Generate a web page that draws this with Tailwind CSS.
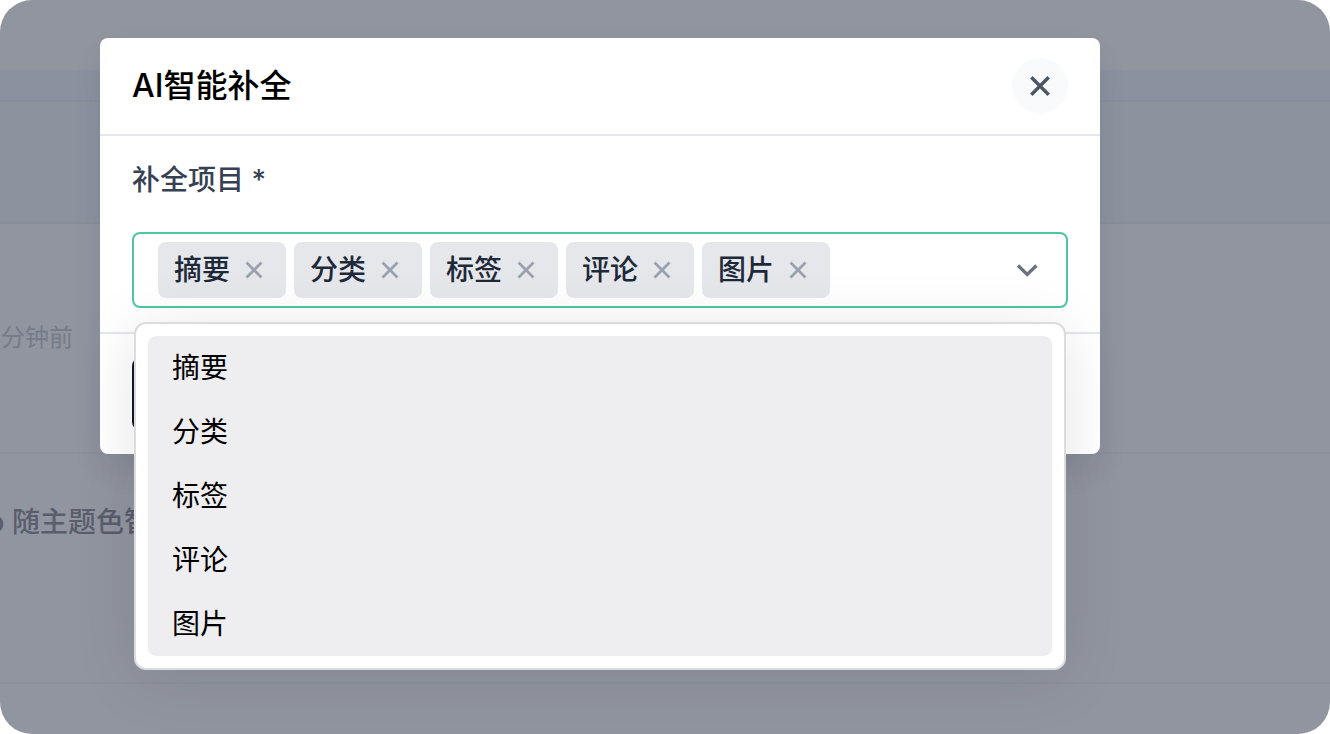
<!DOCTYPE html>
<html lang="zh-CN">
<head>
  <meta charset="UTF-8">
  <meta name="viewport" content="width=device-width, initial-scale=1.0">
  <title>AI智能补全</title>
  <script src="https://cdn.jsdelivr.net/npm/@tailwindcss/browser@4"></script>
</head>
<body class="bg-white font-['Inter','Noto_Sans_CJK_SC',sans-serif]">
  <div class="relative min-h-screen overflow-hidden rounded-[32px] bg-[#9195a0]">

    <!-- Post list behind the modal -->
    <main class="pt-[70px]" aria-hidden="true">
      <div class="h-8 border-b-2 border-[#898e9b] bg-[#8b919f]"></div>
      <div class="h-[122px] border-b-2 border-[#898e9a] bg-[#8c929e]"></div>
      <div class="flex h-[230px] items-center border-b-2 border-[#8d919c]">
        <div class="flex w-[73px] justify-end overflow-hidden">
          <span class="shrink-0 whitespace-nowrap text-2xl text-[#757b88]">分钟前</span>
        </div>
      </div>
      <div class="h-[230px] border-b-2 border-[#8d919c] pt-12">
        <div class="flex w-[152px] justify-end overflow-hidden">
          <span class="shrink-0 whitespace-nowrap text-[28px] leading-10 font-medium text-[#595d6c]">Logo 随主题色智</span>
        </div>
      </div>
    </main>

    <!-- Modal -->
    <div class="absolute inset-0 pt-[38px] pr-[230px] pl-[100px]">
      <div class="rounded-lg bg-white shadow-[0_16px_32px_-4px_rgba(16,24,40,0.12)]" role="dialog" aria-labelledby="modal-title">
        <header class="flex items-center justify-between border-b-2 border-gray-200 px-8 py-5">
          <h2 id="modal-title" class="text-[32px] leading-10 font-medium text-black">AI智能补全</h2>
          <button type="button" aria-label="关闭" class="flex size-14 items-center justify-center rounded-full bg-gray-50 text-gray-600">
            <svg class="size-8" viewBox="0 0 32 32" fill="none" stroke="currentColor" stroke-width="3.4">
              <path d="M7.3 7.3l17.4 17.4M24.7 7.3L7.3 24.7" />
            </svg>
          </button>
        </header>

        <div class="px-8 py-6">
          <label for="items" class="block text-[28px] leading-10 font-medium text-gray-700">补全项目 *</label>
          <div class="relative mt-8">
            <div class="flex items-center gap-2 rounded-lg border-2 border-[#4dc79e] px-6 py-2">
              <span class="flex h-14 items-center rounded-lg bg-gray-200 px-4 text-[28px] font-medium text-gray-800">摘要
                <button type="button" aria-label="移除摘要" class="ml-2 flex size-8 items-center justify-center text-gray-400">
                  <svg class="size-5" viewBox="0 0 20 20" fill="none" stroke="currentColor" stroke-width="2.7"><path d="M2.5 2.5l15 15M17.5 2.5l-15 15" /></svg>
                </button>
              </span>
              <span class="flex h-14 items-center rounded-lg bg-gray-200 px-4 text-[28px] font-medium text-gray-800">分类
                <button type="button" aria-label="移除分类" class="ml-2 flex size-8 items-center justify-center text-gray-400">
                  <svg class="size-5" viewBox="0 0 20 20" fill="none" stroke="currentColor" stroke-width="2.7"><path d="M2.5 2.5l15 15M17.5 2.5l-15 15" /></svg>
                </button>
              </span>
              <span class="flex h-14 items-center rounded-lg bg-gray-200 px-4 text-[28px] font-medium text-gray-800">标签
                <button type="button" aria-label="移除标签" class="ml-2 flex size-8 items-center justify-center text-gray-400">
                  <svg class="size-5" viewBox="0 0 20 20" fill="none" stroke="currentColor" stroke-width="2.7"><path d="M2.5 2.5l15 15M17.5 2.5l-15 15" /></svg>
                </button>
              </span>
              <span class="flex h-14 items-center rounded-lg bg-gray-200 px-4 text-[28px] font-medium text-gray-800">评论
                <button type="button" aria-label="移除评论" class="ml-2 flex size-8 items-center justify-center text-gray-400">
                  <svg class="size-5" viewBox="0 0 20 20" fill="none" stroke="currentColor" stroke-width="2.7"><path d="M2.5 2.5l15 15M17.5 2.5l-15 15" /></svg>
                </button>
              </span>
              <span class="flex h-14 items-center rounded-lg bg-gray-200 px-4 text-[28px] font-medium text-gray-800">图片
                <button type="button" aria-label="移除图片" class="ml-2 flex size-8 items-center justify-center text-gray-400">
                  <svg class="size-5" viewBox="0 0 20 20" fill="none" stroke="currentColor" stroke-width="2.7"><path d="M2.5 2.5l15 15M17.5 2.5l-15 15" /></svg>
                </button>
              </span>
              <input id="items" type="text" role="combobox" aria-expanded="true" aria-controls="items-menu" class="min-w-0 flex-1 bg-transparent text-[28px] outline-none">
              <button type="button" aria-label="展开选项" class="flex size-8 items-center justify-center text-gray-500">
                <svg class="size-6" viewBox="0 0 24 24" fill="none" stroke="currentColor" stroke-width="3.3"><path d="M4 7.500L13.200 16.500L22.400 7.500" /></svg>
              </button>
            </div>

            <!-- Dropdown -->
            <ul id="items-menu" role="listbox" aria-multiselectable="true" class="absolute inset-x-0.5 top-full mt-3.5 rounded-xl border-2 border-[#dcdcde] bg-white p-3 text-[28px] leading-10 text-black shadow-[0_8px_64px_rgba(0,0,0,0.1)]">
              <li role="option" aria-selected="true" class="rounded-t-lg bg-[#eeeef0] px-6 py-3">摘要</li>
              <li role="option" aria-selected="true" class="bg-[#eeeef0] px-6 py-3">分类</li>
              <li role="option" aria-selected="true" class="bg-[#eeeef0] px-6 py-3">标签</li>
              <li role="option" aria-selected="true" class="bg-[#eeeef0] px-6 py-3">评论</li>
              <li role="option" aria-selected="true" class="rounded-b-lg bg-[#eeeef0] px-6 py-3">图片</li>
            </ul>
          </div>
        </div>

        <footer class="border-t-2 border-gray-200 px-8 py-6">
          <button type="button" aria-label="补全" class="block h-[72px] w-32 rounded-lg bg-gray-900"></button>
        </footer>
      </div>
    </div>
  </div>
</body>
</html>
